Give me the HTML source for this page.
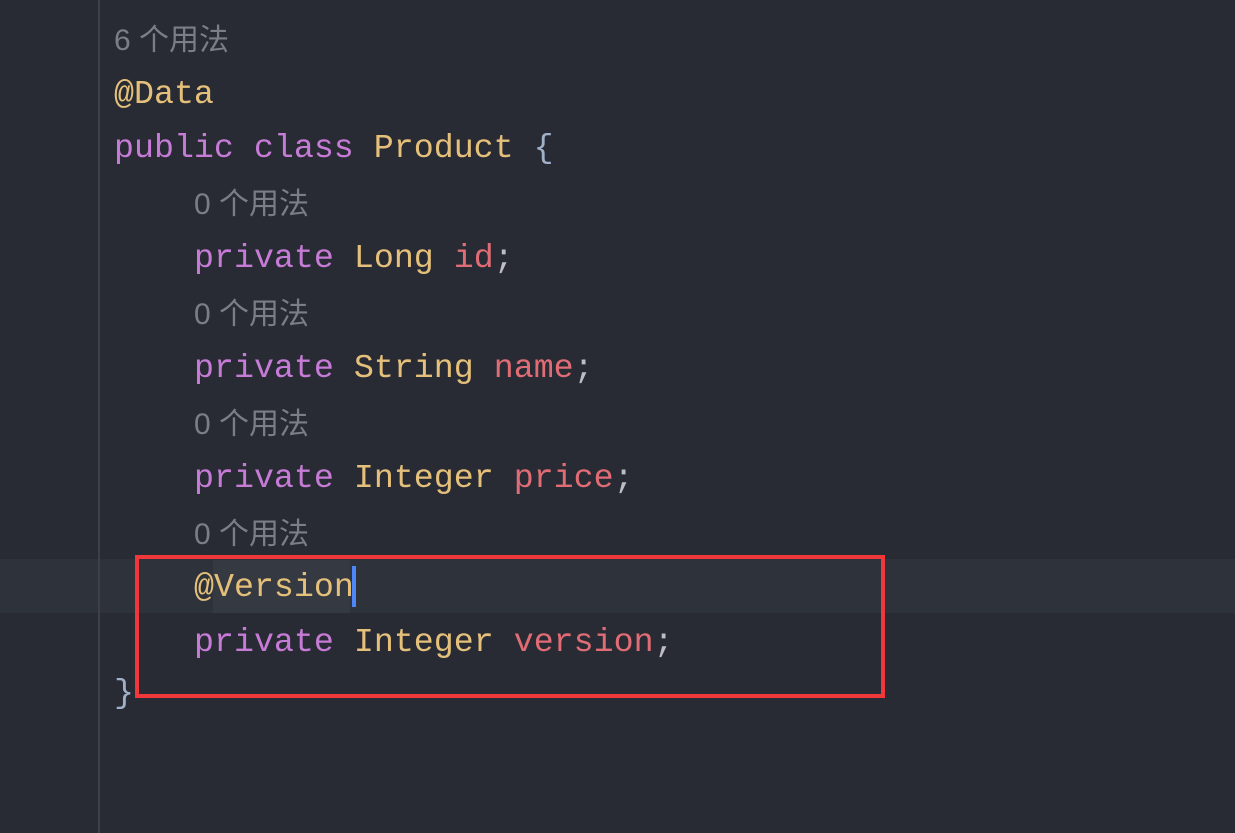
<!DOCTYPE html>
<html><head><meta charset="utf-8"><style>
html,body{margin:0;padding:0;width:1235px;height:833px;overflow:hidden;background:#282b33;}
.g{position:absolute;left:98px;top:0;width:2px;height:833px;background:#3d4048;z-index:2;}
.cur{position:absolute;left:0;top:559px;width:1235px;height:54px;background:#2e323b;}
.l{position:absolute;left:114px;height:54px;line-height:54px;font-family:"Liberation Mono",monospace;font-size:33.3px;white-space:pre;color:#bcbec4;}
.h{position:absolute;left:114px;height:40px;line-height:40px;font-family:"Liberation Sans","Noto Sans CJK SC",sans-serif;font-size:30px;color:#7a7e85;white-space:pre;}
.i{left:194px;}
.k{color:#c67bd6}.t{color:#e5c07b}.f{color:#e06c75}.a{color:#e5c07b}.b{color:#9fb0c8}
.box{position:absolute;left:135px;top:555px;width:742px;height:135px;border:4px solid #f0373a;}
.caret{position:absolute;left:352px;top:566px;width:4px;height:41px;background:#4f86f7;}
.sel{position:absolute;left:213px;top:560px;width:137px;height:53px;background:#353942;}
</style></head><body>
<div class="g"></div>
<div class="cur"></div>
<div class="sel"></div>
<div class="h" style="top:21px">6 个用法</div>
<div class="l a" style="top:67px">@Data</div>
<div class="l" style="top:121px"><span class="k">public class</span> <span class="t">Product</span> <span class="b">{</span></div>
<div class="h i" style="top:185px">0 个用法</div>
<div class="l i" style="top:231px"><span class="k">private</span> <span class="t">Long</span> <span class="f">id</span>;</div>
<div class="h i" style="top:295px">0 个用法</div>
<div class="l i" style="top:341px"><span class="k">private</span> <span class="t">String</span> <span class="f">name</span>;</div>
<div class="h i" style="top:405px">0 个用法</div>
<div class="l i" style="top:451px"><span class="k">private</span> <span class="t">Integer</span> <span class="f">price</span>;</div>
<div class="h i" style="top:515px">0 个用法</div>
<div class="l i a" style="top:560px">@Version</div>
<div class="caret"></div>
<div class="l i" style="top:615px"><span class="k">private</span> <span class="t">Integer</span> <span class="f">version</span>;</div>
<div class="l b" style="top:666px">}</div>
<div class="box"></div>
</body></html>
